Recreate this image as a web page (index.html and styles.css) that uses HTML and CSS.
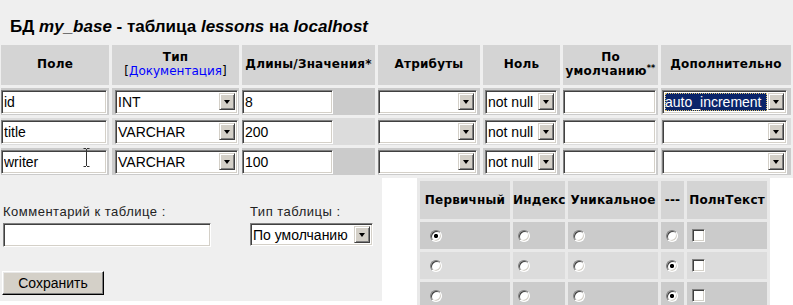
FILE: index.html
```html
<!DOCTYPE html>
<html lang="ru">
<head>
<meta charset="utf-8">
<title>БД my_base - таблица lessons</title>
<link rel="stylesheet" href="styles.css">
</head>
<body>
<div class="top">
  <h1 class="title">БД <i>my_base</i> - таблица <i>lessons</i> на <i>localhost</i></h1>
  <table class="fields">
    <colgroup>
      <col class="c1"><col class="c2"><col class="c3"><col class="c4"><col class="c5"><col class="c6"><col class="c7">
    </colgroup>
    <thead>
      <tr>
        <th>Поле</th>
        <th>Тип<br><span class="doc">[<a href="#">Документация</a>]</span></th>
        <th>Длины/Значения*</th>
        <th>Атрибуты</th>
        <th>Ноль</th>
        <th>По<br>умолчанию<sup>**</sup></th>
        <th>Дополнительно</th>
      </tr>
    </thead>
    <tbody>
      <tr class="dark">
        <td><input class="inp w-field" value="id"></td>
        <td><span class="sel w-type"><span class="val">INT</span><span class="btn"></span></span></td>
        <td><input class="inp w-len" value="8"></td>
        <td><span class="sel w-attr"><span class="val"></span><span class="btn"></span></span></td>
        <td><span class="sel w-null"><span class="val">not null</span><span class="btn"></span></span></td>
        <td><input class="inp w-def" value=""></td>
        <td><span class="sel w-extra"><span class="val hl">auto_increment</span><span class="btn"></span></span></td>
      </tr>
      <tr class="light">
        <td><input class="inp w-field" value="title"></td>
        <td><span class="sel w-type"><span class="val">VARCHAR</span><span class="btn"></span></span></td>
        <td><input class="inp w-len" value="200"></td>
        <td><span class="sel w-attr"><span class="val"></span><span class="btn"></span></span></td>
        <td><span class="sel w-null"><span class="val">not null</span><span class="btn"></span></span></td>
        <td><input class="inp w-def" value=""></td>
        <td><span class="sel w-extra"><span class="val"></span><span class="btn"></span></span></td>
      </tr>
      <tr class="dark">
        <td><input class="inp w-field" value="writer"></td>
        <td><span class="sel w-type"><span class="val">VARCHAR</span><span class="btn"></span></span></td>
        <td><input class="inp w-len" value="100"></td>
        <td><span class="sel w-attr"><span class="val"></span><span class="btn"></span></span></td>
        <td><span class="sel w-null"><span class="val">not null</span><span class="btn"></span></span></td>
        <td><input class="inp w-def" value=""></td>
        <td><span class="sel w-extra"><span class="val"></span><span class="btn"></span></span></td>
      </tr>
    </tbody>
  </table>
</div>
<div class="lower">
  <div class="form">
    <div class="form-row">
      <label class="field f-comment"><span class="lbl">Комментарий к таблице :</span><input class="inp w-comment" value=""></label>
      <label class="field f-type"><span class="lbl">Тип таблицы :</span><span class="sel w-ttype"><span class="val">По умолчанию</span><span class="btn"></span></span></label>
    </div>
    <button class="save" type="button">Сохранить</button>
  </div>
  <div class="keys">
    <table class="keytab">
      <colgroup><col class="k1"><col class="k2"><col class="k3"><col class="k4"><col class="k5"></colgroup>
      <thead>
        <tr><th>Первичный</th><th>Индекс</th><th>Уникальное</th><th>---</th><th>ПолнТекст</th></tr>
      </thead>
      <tbody>
        <tr class="dark">
          <td><input type="radio" name="k0" checked></td>
          <td><input type="radio" name="k0"></td>
          <td><input type="radio" name="k0"></td>
          <td><input type="radio" name="k0"></td>
          <td><input type="checkbox"></td>
        </tr>
        <tr class="light">
          <td><input type="radio" name="k1"></td>
          <td><input type="radio" name="k1"></td>
          <td><input type="radio" name="k1"></td>
          <td><input type="radio" name="k1" checked></td>
          <td><input type="checkbox"></td>
        </tr>
        <tr class="dark">
          <td><input type="radio" name="k2"></td>
          <td><input type="radio" name="k2"></td>
          <td><input type="radio" name="k2"></td>
          <td><input type="radio" name="k2" checked></td>
          <td><input type="checkbox"></td>
        </tr>
      </tbody>
    </table>
  </div>
</div>
<svg class="ibeam" width="7" height="19" viewBox="0 0 7 19"><path d="M0.5 0.5h2.5M4 0.5h2.5M3.5 1v17M0.5 18.5h2.5M4 18.5h2.5" stroke="#333" stroke-width="1" fill="none"/></svg>
</body>
</html>
```
FILE: styles.css
```css
html { background: #fff; }
body {
  margin: 0;
  font-family: "DejaVu Sans", sans-serif;
  overflow: hidden;
  position: relative;
}
.top {
  background: #efefef;
  padding-top: 17px;
}
.title {
  margin: 0 0 5px;
  padding-left: 10px;
  font: bold 17px/20px "Liberation Sans", Arial, sans-serif;
  color: #000;
}
.fields {
  border-collapse: separate;
  border-spacing: 3px;
  table-layout: fixed;
  width: 796px;
  margin: 0 0 0 -2px;
}
.c1 { width: 108px; }
.c2 { width: 127px; }
.c3 { width: 133px; }
.c4 { width: 102px; }
.c5 { width: 77px; }
.c6 { width: 95px; }
.c7 { width: 130px; }

.fields th, .keytab th {
  background: #d4d4d4;
  font: bold 12px/14px "DejaVu Sans", sans-serif;
  letter-spacing: 0.2px;
  text-align: center;
  vertical-align: middle;
  padding: 0;
  white-space: nowrap;
  color: #000;
}
.fields th { height: 40px; padding-bottom: 2px; box-sizing: border-box; }
.doc { font-weight: normal; letter-spacing: 0; }
.doc a { color: #0000ff; text-decoration: none; }
sup { font-size: 8px; line-height: 0; vertical-align: 4px; }

.fields td {
  padding: 0;
  height: 27px;
  vertical-align: middle;
}
tr.dark td { background: #cbcbcb; }
tr.light td { background: #dcdcdc; }

.inp, .sel {
  display: block;
  box-sizing: border-box;
  height: 24px;
  margin: 0;
  background: #fff;
  border: 1px solid;
  border-color: #808080 #fff #fff #808080;
  box-shadow: inset 1px 1px 0 #404040, inset -1px -1px 0 #d4d0c8;
  font: 14px "Liberation Sans", Arial, sans-serif;
  color: #000;
  outline: none;
}
.inp { padding: 0 2px; }
.sel {
  display: flex;
  align-items: center;
  padding: 0 2px 0 2px;
}
.sel .val {
  flex: 1;
  white-space: nowrap;
  overflow: hidden;
  line-height: 18px;
  height: 18px;
}
.sel .val.hl {
  background: #0a246a;
  color: #fff;
  outline: 1px dotted #d8c070;
  outline-offset: -1px;
  margin-right: 1px;
}
.sel .btn {
  flex: none;
  width: 16px;
  height: 17px;
  box-sizing: border-box;
  background: #d4d0c8;
  border: 1px solid;
  border-color: #d4d0c8 #404040 #404040 #d4d0c8;
  box-shadow: inset 1px 1px 0 #fff, inset -1px -1px 0 #808080;
  display: flex;
  align-items: center;
  justify-content: center;
}
.sel .btn::after {
  content: "";
  width: 0;
  height: 0;
  border-style: solid;
  border-width: 4px 3.5px 0;
  border-color: #000 transparent transparent;
}

.w-field { width: 106px; }
.w-type { width: 123px; margin-left: 3px !important; }
.w-len { width: 91px; }
.w-attr { width: 99px; }
.w-null { width: 72px; margin-left: 2px !important; }
.w-def { width: 93px; }
.w-extra { width: 125px; margin-left: 1px !important; }

.lower {
  display: flex;
  align-items: flex-start;
  background: #fff;
}
.form {
  flex: none;
  width: 382px;
  height: 123px;
  background: #efefef;
  box-sizing: border-box;
  padding-top: 26px;
}
.form-row { display: flex; }
.field {
  display: flex;
  flex-direction: column;
  gap: 4px;
}
.f-comment { width: 247px; padding-left: 3px; }
.lbl {
  font: 13px/15px "Liberation Sans", Arial, sans-serif;
  letter-spacing: 0.5px;
  color: #222;
}
.w-comment { width: 208px; }
.w-ttype { width: 123px; height: 23px; }
.save {
  display: block;
  margin: 24px 0 0 2px;
  width: 102px;
  height: 24px;
  padding: 0;
  background: #d4d0c8;
  border: 1px solid;
  border-color: #fff #000 #000 #fff;
  box-shadow: inset -1px -1px 0 #808080, inset 1px 1px 0 #e8e8e8;
  font: 14px "Liberation Sans", Arial, sans-serif;
  color: #000;
}

.keys { padding-left: 35px; }
.keytab {
  border-collapse: separate;
  border-spacing: 3px;
  background: #e9e9e9;
  table-layout: fixed;
  width: 353px;
}
.k1 { width: 90px; }
.k2 { width: 52px; }
.k3 { width: 90px; }
.k4 { width: 23px; }
.k5 { width: 80px; }
.keytab th { height: 38px; }
.keytab td {
  height: 27px;
  padding: 0 0 0 5px;
  vertical-align: middle;
}
.keytab td:first-child { padding-left: 10px; }

input[type="radio"] {
  appearance: none;
  -webkit-appearance: none;
  display: block;
  box-sizing: border-box;
  width: 12px;
  height: 12px;
  margin: 0;
  border-radius: 50%;
  border: 1px solid;
  border-color: #808080 #fff #fff #808080;
  box-shadow: inset 1px 1px 0 #404040, inset -1px -1px 0 #d4d0c8;
  background: #fff;
}
input[type="radio"]:checked {
  background: radial-gradient(circle, #000 0 1.8px, #fff 2.4px);
}
input[type="checkbox"] {
  appearance: none;
  -webkit-appearance: none;
  display: block;
  box-sizing: border-box;
  width: 13px;
  height: 13px;
  margin: 0;
  border: 1px solid;
  border-color: #808080 #fff #fff #808080;
  box-shadow: inset 1px 1px 0 #404040, inset -1px -1px 0 #d4d0c8;
  background: #fff;
}
.ibeam {
  position: absolute;
  left: 83px;
  top: 148px;
}
```
